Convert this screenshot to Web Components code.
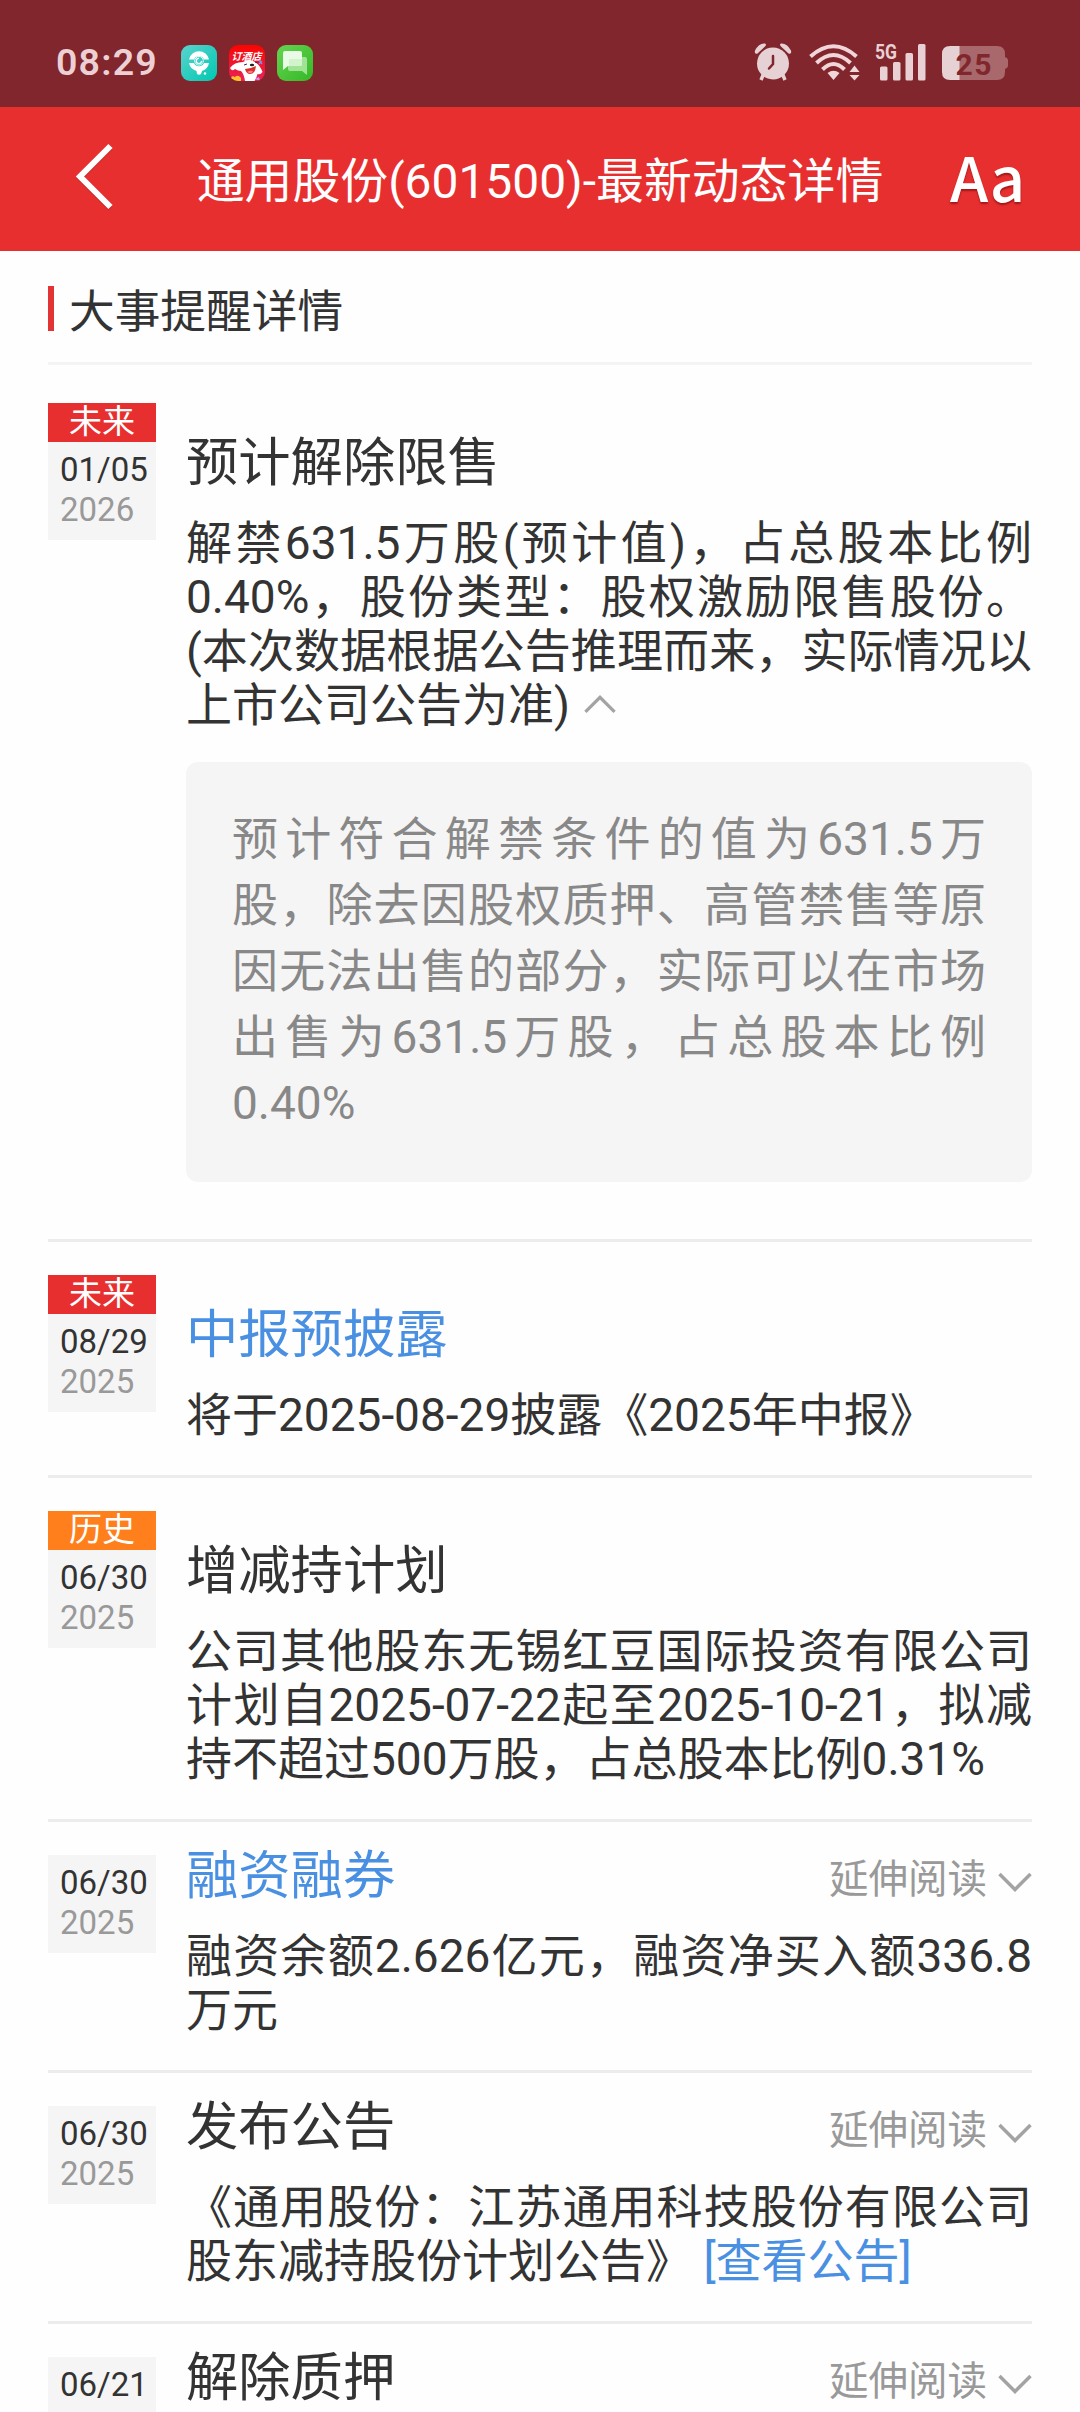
<!DOCTYPE html>
<html lang="zh-CN">
<head>
<meta charset="utf-8">
<title>最新动态详情</title>
<style>
  html, body {
    margin: 0;
    padding: 0;
  }
  body {
    width: 1080px;
    height: 2412px;
    overflow: hidden;
    background: #fefefe;
    color: #333;
    font-family: Roboto, "Noto Sans CJK SC", sans-serif;
    text-spacing-trim: space-all;
  }
  main {
    padding: 0 48px;
  }
</style>
</head>
<body>
  <status-bar></status-bar>
  <app-header>通用股份(601500)-最新动态详情</app-header>
  <main>
    <section-heading>大事提醒详情</section-heading>
    <event-item class="first" date="01/05" year="2026" tag="未来">
      <span slot="title">预计解除限售</span>
      解禁631.5万股(预计值)，占总股本比例0.40%，股份类型：股权激励限售股份。(本次数据根据公告推理而来，实际情况以上市公司公告为准)<chevron-icon class="inline" direction="up" width="32"></chevron-icon>
      <note-box slot="note">预计符合解禁条件的值为631.5万股，除去因股权质押、高管禁售等原因无法出售的部分，实际可以在市场出售为631.5万股，占总股本比例0.40%</note-box>
    </event-item>
    <event-item date="08/29" year="2025" tag="未来" link>
      <span slot="title">中报预披露</span>
      将于2025-08-29披露《2025年中报》
    </event-item>
    <event-item date="06/30" year="2025" tag="历史" past>
      <span slot="title">增减持计划</span>
      公司其他股东无锡红豆国际投资有限公司计划自2025-07-22起至2025-10-21，拟减持不超过500万股，占总股本比例0.31%
    </event-item>
    <event-item date="06/30" year="2025" link>
      <span slot="title">融资融券</span>
      <more-link slot="more">延伸阅读</more-link>
      融资余额2.626亿元，融资净买入额336.8万元
    </event-item>
    <event-item date="06/30" year="2025">
      <span slot="title">发布公告</span>
      <more-link slot="more">延伸阅读</more-link>
      《通用股份：江苏通用科技股份有限公司股东减持股份计划公告》 <text-link>[查看公告]</text-link>
    </event-item>
    <event-item date="06/21">
      <span slot="title">解除质押</span>
      <more-link slot="more">延伸阅读</more-link>
    </event-item>
  </main>

<script>
// attach an open shadow root filled with the given markup
function render(el, html) {
  const template = document.createElement('template');
  template.innerHTML = html;
  el.attachShadow({ mode: 'open' }).appendChild(template.content.cloneNode(true));
}

class StatusBar extends HTMLElement {
  constructor() {
    super();
    render(this, `
      <style>
        :host {
          display: flex;
          align-items: center;
          justify-content: space-between;
          box-sizing: border-box;
          height: 107px;
          padding: 19px 72px 0 56px;
          background: #80262c;
          color: #ecd0d4;
        }
        div {
          display: flex;
          align-items: center;
        }
        .time {
          width: 113px;
          margin: 0 12px 3px 0;
          font-size: 37.500px;
          font-weight: 600;
          letter-spacing: 1.2px;
          line-height: 38px;
        }
        .apps {
          gap: 12px;
        }
        .state {
          margin-bottom: 2px;
        }
        svg {
          display: block;
        }
        .wifi {
          margin: 0 15px 0 17px;
        }
        .battery {
          margin-left: 16px;
        }
      </style>
      <div>
        <span class="time">08:29</span>
        <div class="apps">
          <svg width="36" height="36" viewBox="0 0 36 36">
            <defs>
              <linearGradient id="teal" x1="0" y1="0" x2="1" y2="1">
                <stop offset="0" stop-color="#5bd3cd"/><stop offset="1" stop-color="#00c8b2"/>
              </linearGradient>
            </defs>
            <rect width="36" height="36" rx="9" fill="url(#teal)"/>
            <path d="M8 14.500a10.200 10.200 0 0 1 20 0h-5a5.500 5.500 0 0 0-10 0zM8 18h5a5.500 5.500 0 0 0 10 0h5a10.500 10.500 0 0 1-7 8l-1 3q-2 1.500-4 0l-.5-3a10.500 10.500 0 0 1-7.500-8z" fill="#fff"/>
            <circle cx="18" cy="15.800" r="4.300" fill="#35cfc4" stroke="#e8fffc" stroke-width="1"/>
            <path d="M20.500 16a2.600 2.600 0 1 1-2.500-2.700" fill="none" stroke="#fff" stroke-width="1.200"/>
            <circle cx="24" cy="28.500" r="1.200" fill="#fff"/>
          </svg>
          <svg width="36" height="36" viewBox="0 0 36 36">
            <defs>
              <linearGradient id="red" x1="0" y1="0" x2="0" y2="1">
                <stop offset="0" stop-color="#fa0500"/><stop offset="1" stop-color="#e8235a"/>
              </linearGradient>
              <clipPath id="round"><rect width="36" height="36" rx="9"/></clipPath>
            </defs>
            <g clip-path="url(#round)">
              <rect width="36" height="36" fill="url(#red)"/>
              <text x="2.500" y="14.500" font-size="10" font-weight="700" font-style="italic" fill="#fff">订酒店</text>
              <path d="M14 17q6-4 12 0 5 3 7.500 10-2 3-5 2-1 4-3 7H16q-1-7-4-10-3 0-6-2-3 3-5-1 4-6 13-6z" fill="#fff"/>
              <path d="M16 24q5 0 11-3-1 9-7 8-3-1-4-5z" fill="#d8302c"/>
              <path d="M18 27q3-2 6-1-1 3-4 2z" fill="#f77e84"/>
              <ellipse cx="23" cy="20" rx="2.200" ry="1.200" fill="#222"/>
              <path d="M15 20l3-1M26 17l2.500 1" stroke="#333" stroke-width="1"/>
              <path d="M2 33q1-3 4-1 3-3 6 1v4H2z" fill="#ffc22a"/>
              <path d="M30 15l3 4m-3 0l3-3" stroke="#7f8cf0" stroke-width="1.300"/>
              <path d="M26 34l4-2 1 4z" fill="#c79bf2"/>
            </g>
          </svg>
          <svg width="36" height="36" viewBox="0 0 36 36">
            <defs>
              <linearGradient id="green" x1="0" y1="0" x2="1" y2="1">
                <stop offset="0" stop-color="#65d451"/><stop offset="1" stop-color="#35b827"/>
              </linearGradient>
            </defs>
            <rect width="36" height="36" rx="9" fill="url(#green)"/>
            <path d="M14 12h14q2 0 2 2v16l-5-4H13q-2 0-2-2V14z" fill="#a1e395"/>
            <path d="M8 6h15q2 0 2 2v11q0 2-2 2H11l-5 4V8q0-2 2-2z" fill="#e9fbe6"/>
            <path d="M12 14h13v5q0 2-2 2H12z" fill="#d2f3cb"/>
          </svg>
        </div>
      </div>
      <div class="state">
        <svg width="38" height="38" viewBox="0 0 38 38" fill="#e6d1d4">
          <circle cx="19" cy="20.500" r="16"/>
          <path d="M1 7.500Q5 0 11 .5Q13 1.500 11 3.500L3.500 10.500Q0 11.500 1 7.500zM37 7.500Q33 0 27 .5Q25 1.500 27 3.500L34.500 10.500Q38 11.500 37 7.500z"/>
          <path d="M9.500 31L7 37M28.500 31L31 37" stroke="#e6d1d4" stroke-width="3.500"/>
          <path d="M19 13V21L15 25.500" fill="none" stroke="#80262c" stroke-width="2.500" stroke-linecap="round"/>
        </svg>
        <svg class="wifi" width="51" height="38" viewBox="0 0 51 38">
          <g fill="none" stroke="#f0d5d9" stroke-width="4">
            <path d="M1.500 13.500Q24.500-7 47.500 13.500"/>
            <path d="M7.500 20Q24.500 4 41.500 20"/>
            <path d="M13.500 26.500Q24.500 15.500 35.500 26.500"/>
          </g>
          <path d="M24.500 37L18.500 30Q24.500 25.500 30.500 30zM40.500 29h10L45.500 22.500zM40.500 32h10L45.500 37.500z" fill="#f0d5d9"/>
        </svg>
        <svg width="51" height="38" viewBox="0 0 51 38" fill="#e9d0d4">
          <text x="0" y="16" font-size="20" font-weight="700" textLength="22" lengthAdjust="spacingAndGlyphs">5G</text>
          <rect x="5" y="23.500" width="7.500" height="14" rx="1.500"/>
          <rect x="18" y="19" width="7.500" height="18.500" rx="1.500"/>
          <rect x="30.500" y="10" width="7.500" height="27.500" rx="1.500"/>
          <rect x="43" y="1" width="7.500" height="36.500" rx="1.500"/>
        </svg>
        <svg class="battery" width="66" height="38" viewBox="0 0 66 38">
          <path d="M17 3H55Q63 3 63 11V14Q66 15 66 17V23Q66 25 63 26V29Q63 37 55 37H17z" fill="#a8686c"/>
          <path d="M8 3H17.500V37H8Q0 37 0 29V11Q0 3 8 3z" fill="#e6d1d4"/>
          <text x="13.500" y="31.500" font-size="30" font-weight="700" fill="#80262c" textLength="36">25</text>
        </svg>
      </div>
    `);
  }
}

class AppHeader extends HTMLElement {
  constructor() {
    super();
    render(this, `
      <style>
        :host {
          display: grid;
          grid-template-columns: 190px 1fr 190px;
          align-items: center;
          height: 144px;
          background: #e82f30;
          color: #fff;
        }
        svg {
          display: block;
          margin: 0 0 4px 74px;
        }
        .title {
          padding-top: 5px;
          font-size: 47.900px;
          line-height: 60px;
          text-align: center;
          white-space: nowrap;
        }
        .font {
          padding: 0 55px 6px 0;
          font: 500 61.500px/80px "Noto Sans CJK SC", sans-serif;
          text-align: right;
          text-shadow: 0 2px 2px rgba(90, 0, 0, .5);
        }
      </style>
      <svg width="42" height="68" viewBox="0 0 42 68" fill="none" stroke-width="6">
        <path d="M36.500 4.500L6 35L36.500 65.500" stroke="#b52a2a" stroke-opacity=".6"/>
        <path d="M36.500 3L6 33.500L36.500 64" stroke="#fff"/>
      </svg>
      <div class="title"><slot></slot></div>
      <div class="font">Aa</div>
    `);
  }
}

class SectionHeading extends HTMLElement {
  constructor() {
    super();
    render(this, `
      <style>
        :host {
          display: flex;
          align-items: center;
          box-sizing: border-box;
          height: 114px;
          padding-top: 2px;
          border-bottom: 3px solid #f4f4f4;
          font-size: 45.700px;
        }
        i {
          width: 6px;
          height: 45px;
          margin: 5px 15px 4px 0;
          background: #e23335;
        }
      </style>
      <i></i><slot></slot>
    `);
  }
}

class ChevronIcon extends HTMLElement {
  constructor() {
    super();
    const width = this.getAttribute('width') || 34;
    const points = this.getAttribute('direction') === 'up' ? '1.500,18 17,2.500 32.500,18' : '1.500,2 17,17.500 32.500,2';
    render(this, `
      <style>
        :host {
          display: inline-block;
        }
        :host(.inline) {
          margin-left: 14px;
        }
        svg {
          display: block;
        }
        :host(.inline) svg {
          margin-bottom: 7px;
        }
      </style>
      <svg width="${width}" height="${width * 20 / 34}" viewBox="0 0 34 20">
        <polyline points="${points}" fill="none" stroke="#a3a3a3" stroke-width="3.500"/>
      </svg>
    `);
  }
}

class MoreLink extends HTMLElement {
  constructor() {
    super();
    render(this, `
      <style>
        :host {
          display: flex;
          align-items: center;
          gap: 11px;
          padding-top: 8px;
          font-size: 39.500px;
          line-height: 54px;
          color: #999;
        }
        chevron-icon {
          margin-top: 4px;
        }
      </style>
      <slot></slot><chevron-icon></chevron-icon>
    `);
  }
}

class TextLink extends HTMLElement {
  constructor() {
    super();
    render(this, `
      <style>
        :host {
          display: inline;
          color: #4a90e2;
        }
      </style>
      <slot></slot>
    `);
  }
}

class NoteBox extends HTMLElement {
  constructor() {
    super();
    render(this, `
      <style>
        :host {
          display: block;
          margin: 30px 0 24px;
          padding: 44px 46px 46px;
          border-radius: 12px;
          background: #f5f5f5;
          color: #888;
          font-size: 46px;
          line-height: 66px;
          text-align: justify;
        }
      </style>
      <slot></slot>
    `);
  }
}

class DateTag extends HTMLElement {
  constructor() {
    super();
    const tag = this.getAttribute('tag');
    render(this, `
      <style>
        :host {
          display: block;
          width: 108px;
          background: #f5f5f5;
          font-size: 33px;
          line-height: 40px;
        }
        .tag {
          height: 39px;
          background: #e82f30;
          color: #fff;
          line-height: 38px;
          text-align: center;
        }
        :host([past]) .tag {
          background: #ff7f1c;
        }
        .date {
          height: 90px;
          padding: 8px 0 0 12px;
        }
        .year {
          color: #999;
        }
      </style>
      ${tag ? `<div class="tag">${tag}</div>` : ''}
      <div class="date">
        <div>${this.getAttribute('date')}</div>
        <div class="year">${this.getAttribute('year') || ''}</div>
      </div>
    `);
  }
}

class EventItem extends HTMLElement {
  constructor() {
    super();
    const tag = this.getAttribute('tag') || '';
    const year = this.getAttribute('year') || '';
    render(this, `
      <style>
        :host {
          display: grid;
          grid-template-columns: 108px 846px;
          column-gap: 30px;
          align-items: start;
          padding: 33px 0;
          border-bottom: 3px solid #ececec;
        }
        :host(.first) {
          padding-top: 38px;
        }
        .head {
          display: flex;
          justify-content: space-between;
          height: 62px;
          margin: -10px 0 22px;
          font-size: 52.300px;
          line-height: 63px;
        }
        :host([tag]) .head {
          margin-top: 29px;
        }
        :host([link]) .head {
          color: #4a90e2;
        }
        .text {
          font-size: 46px;
          line-height: 54px;
          text-align: justify;
        }
      </style>
      <date-tag date="${this.getAttribute('date')}" year="${year}" tag="${tag}" ${this.hasAttribute('past') ? 'past' : ''}></date-tag>
      <div>
        <div class="head"><slot name="title"></slot><slot name="more"></slot></div>
        <div class="text"><slot></slot></div>
        <slot name="note"></slot>
      </div>
    `);
  }
}

window.customElements.define('status-bar', StatusBar);
window.customElements.define('app-header', AppHeader);
window.customElements.define('section-heading', SectionHeading);
window.customElements.define('chevron-icon', ChevronIcon);
window.customElements.define('more-link', MoreLink);
window.customElements.define('text-link', TextLink);
window.customElements.define('note-box', NoteBox);
window.customElements.define('date-tag', DateTag);
window.customElements.define('event-item', EventItem);
</script>
</body>
</html>
